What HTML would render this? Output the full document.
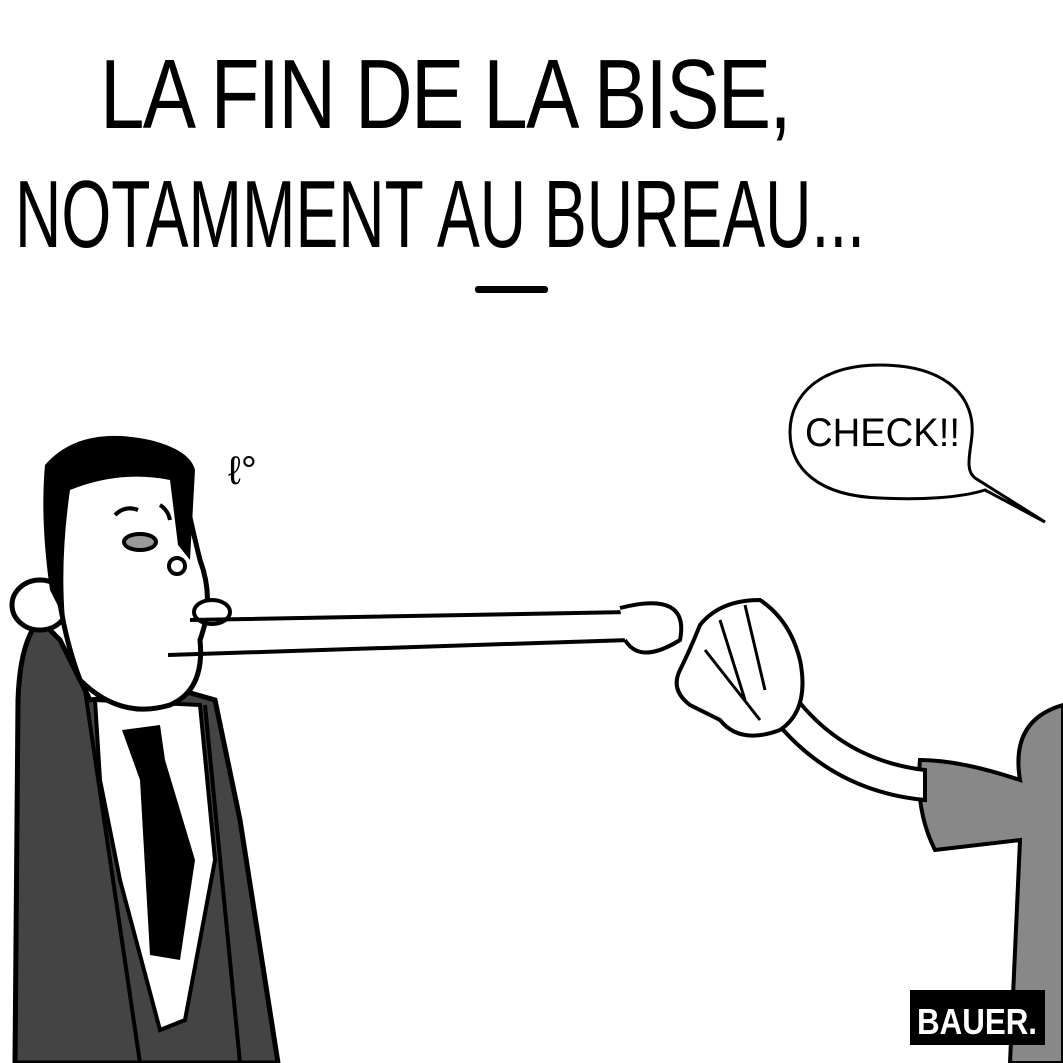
<!DOCTYPE html>
<html><head><style>
html,body{margin:0;padding:0;background:#fff;width:1063px;height:1063px;overflow:hidden}
svg{display:block}
</style></head><body>
<svg width="1063" height="1063" viewBox="0 0 1063 1063" xmlns="http://www.w3.org/2000/svg">
<rect width="1063" height="1063" fill="#fff"/>
<g font-family="'Liberation Sans Narrow','Liberation Sans',sans-serif" fill="#000">
<text x="100" y="128" font-size="98" textLength="690" lengthAdjust="spacingAndGlyphs" style="letter-spacing:-2px">LA FIN DE LA BISE,</text>
<text x="15" y="247" font-size="96" textLength="850" lengthAdjust="spacingAndGlyphs">NOTAMMENT AU BUREAU...</text>
</g>
<rect x="475" y="286" width="73" height="7" rx="3" fill="#000"/>

<path d="M40 620 Q20 640 18 700 L15 1063 L278 1063 L240 820 L215 700 L180 690 L90 700 L60 640 Z" fill="#444" stroke="#000" stroke-width="5"/>
<path d="M95 700 L200 705 L215 860 L185 1020 L160 1030 L120 880 L100 780 Z" fill="#fff" stroke="#000" stroke-width="4"/>
<path d="M85 690 L140 1063 M205 705 L240 1063" stroke="#000" stroke-width="4" fill="none"/>
<path d="M122 730 L160 725 L165 760 L195 860 L180 960 L150 955 L140 780 Z" fill="#000"/>
<ellipse cx="40" cy="605" rx="28" ry="25" fill="#fff" stroke="#000" stroke-width="5"/>
<path d="M55 500 Q50 600 80 680 Q120 720 170 705 Q205 690 200 640 Q215 600 200 560 Q190 520 180 470 L60 470 Z" fill="#fff" stroke="#000" stroke-width="5"/>
<path d="M45 465 Q80 425 150 440 Q190 450 195 470 L190 560 L178 545 L170 480 Q120 470 70 490 Q60 560 65 620 L50 590 Q40 520 45 465 Z" fill="#000"/>
<ellipse cx="140" cy="542" rx="16" ry="8" fill="#999" stroke="#000" stroke-width="4"/>
<circle cx="177" cy="566" r="8" fill="#fff" stroke="#000" stroke-width="4"/>
<path d="M115 515 Q125 505 138 510 M160 505 Q168 510 170 520" stroke="#000" stroke-width="4" fill="none"/>
<ellipse cx="212" cy="612" rx="18" ry="12" fill="#fff" stroke="#000" stroke-width="4"/>
<path d="M190 620 L630 612 M168 655 L630 640" stroke="#000" stroke-width="4" fill="none"/>
<path d="M620 608 Q690 590 680 640 Q640 665 625 640" fill="#fff" stroke="#000" stroke-width="4"/>
<text x="228" y="484" font-family="Liberation Sans,sans-serif" font-size="40">ℓ°</text>

<path d="M1063 705 Q1010 720 1020 780 Q960 760 920 760 Q915 810 935 850 L1020 840 L1010 1063 L1063 1063 Z" fill="#888" stroke="#000" stroke-width="4"/>
<path d="M760 700 Q820 790 925 800 L925 770 Q840 760 790 690 Z" fill="#fff" stroke="#000" stroke-width="4"/>
<path d="M700 625 Q720 600 760 600 Q790 620 800 660 Q810 710 780 730 Q740 745 720 720 L690 705 Q670 690 680 670 Q690 650 700 625 Z" fill="#fff" stroke="#000" stroke-width="4"/>
<path d="M720 620 L745 700 M745 605 L765 690 M705 650 L760 720" stroke="#000" stroke-width="3" fill="none"/>

<path d="M880 365 C950 365 975 400 972 435 C970 455 965 470 975 478 L1045 522 L985 490 C960 498 920 500 880 498 C820 496 790 470 790 432 C790 395 820 365 880 365 Z" fill="#fff" stroke="#000" stroke-width="3"/>
<text x="805" y="446" font-family="Liberation Sans Narrow,Liberation Sans,sans-serif" font-size="40" textLength="155" lengthAdjust="spacingAndGlyphs">CHECK!!</text>

<rect x="910" y="990" width="135" height="55" fill="#000"/>
<text x="917" y="1034" font-family="Liberation Sans,sans-serif" font-weight="bold" font-size="36" fill="#fff" textLength="120" lengthAdjust="spacingAndGlyphs">BAUER.</text>
</svg>
</body></html>
